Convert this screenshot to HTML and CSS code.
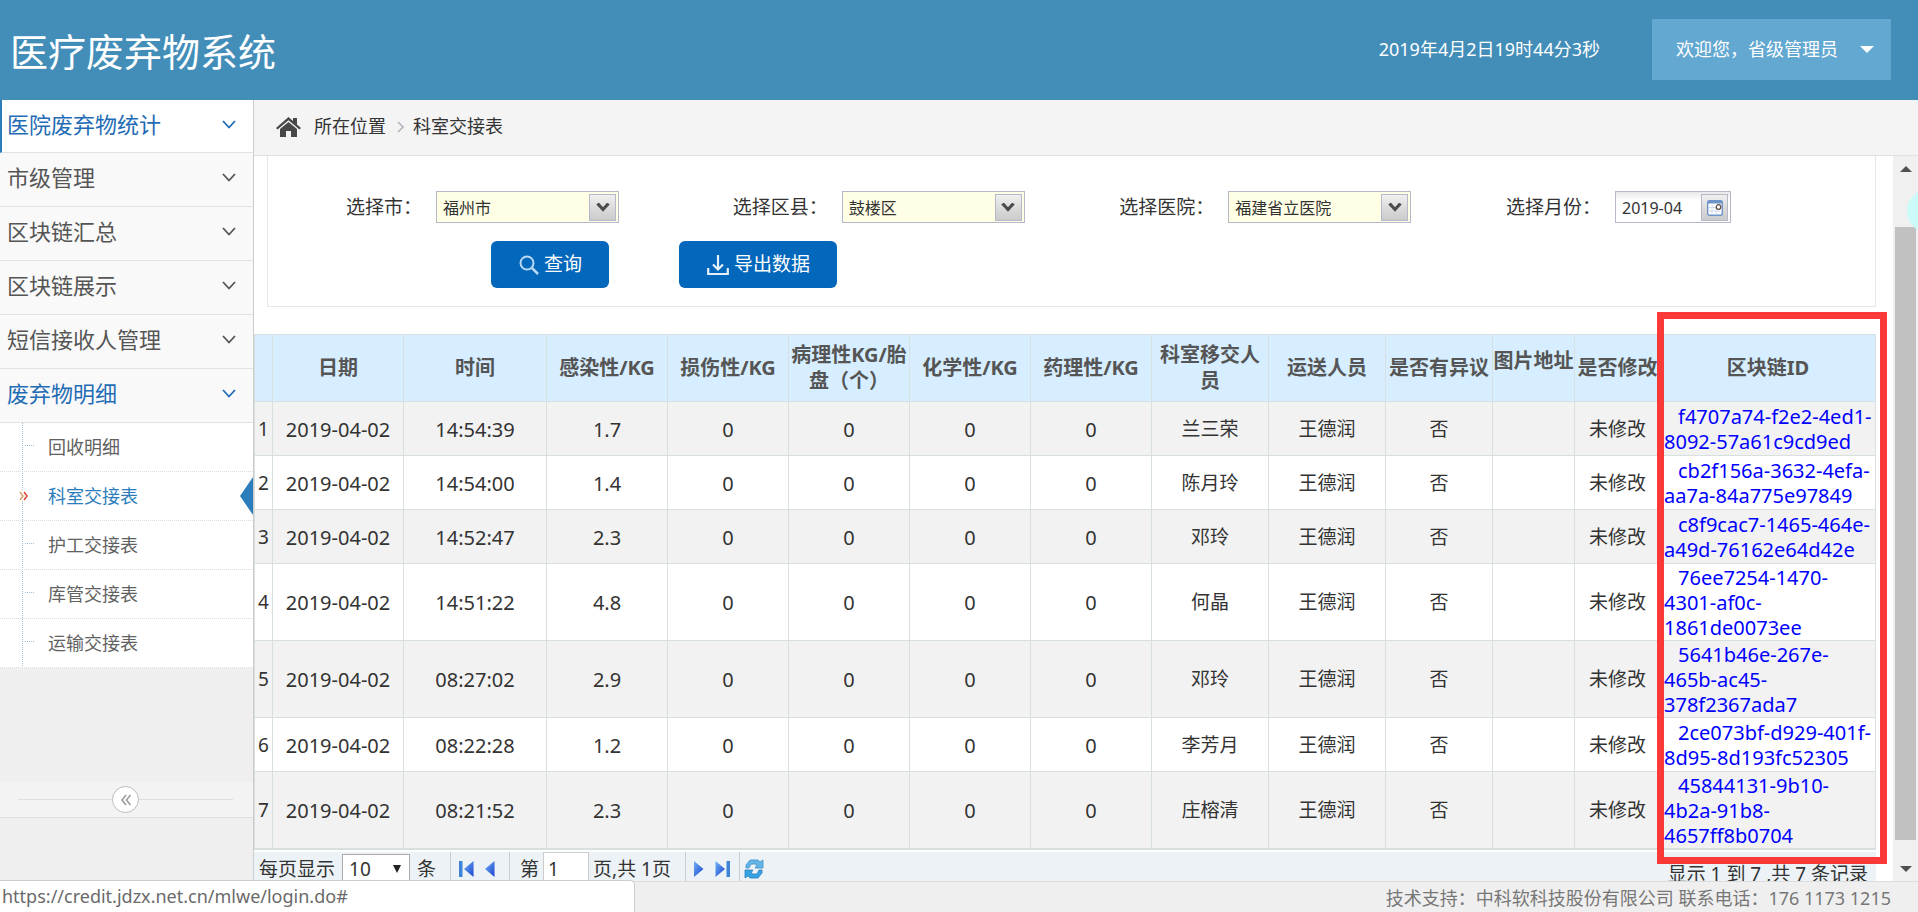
FILE: index.html
```html
<!DOCTYPE html>
<html lang="zh-CN">
<head>
  <meta charset="UTF-8">
  <meta name="viewport" content="width=device-width, initial-scale=1.0">
  <title>医疗废弃物系统</title>
  <link rel="stylesheet" href="styles.css">
</head>
<body>
  <!-- shared icons -->
  <svg class="icon-defs" aria-hidden="true">
    <symbol id="chevron" viewBox="0 0 14 9"><path d="M1 1l6 6.5L13 1" fill="none" stroke="currentColor" stroke-width="1.8"/></symbol>
    <symbol id="combo-arrow" viewBox="0 0 14 9"><path d="M1.500 .5L7 6.500l5.500-6" fill="none" stroke="#4c4c4c" stroke-width="3.200"/></symbol>
    <symbol id="arrow-left" viewBox="0 0 10 16"><path d="M9.500 0v16L0 8z" fill="url(#blue)"/></symbol>
    <linearGradient id="blue" x1="0" y1="0" x2="1" y2="1"><stop offset="0" stop-color="#6fb4f2"/><stop offset="1" stop-color="#1a3fd0"/></linearGradient>
  </svg>

  <header class="main-header">
    <h1 class="brand">医疗废弃物系统</h1>
    <div class="header-right">
      <span class="clock">2019年4月2日19时44分3秒</span>
      <button type="button" class="user-menu">欢迎您，省级管理员<span class="caret"></span></button>
    </div>
  </header>

  <div class="container">
    <aside class="sidebar">
      <ul class="nav-list">
        <li class="nav-item first"><a href="#">医院废弃物统计<svg class="chevron"><use href="#chevron"/></svg></a></li>
        <li class="nav-item"><a href="#">市级管理<svg class="chevron"><use href="#chevron"/></svg></a></li>
        <li class="nav-item"><a href="#">区块链汇总<svg class="chevron"><use href="#chevron"/></svg></a></li>
        <li class="nav-item"><a href="#">区块链展示<svg class="chevron"><use href="#chevron"/></svg></a></li>
        <li class="nav-item"><a href="#">短信接收人管理<svg class="chevron"><use href="#chevron"/></svg></a></li>
        <li class="nav-item open">
          <a href="#">废弃物明细<svg class="chevron"><use href="#chevron"/></svg></a>
          <ul class="submenu">
            <li><a href="#">回收明细</a></li>
            <li class="active"><a href="#">科室交接表</a>
              <svg class="mark" viewBox="0 0 9 10"><path d="M1 1l3 4-3 4" fill="none" stroke="#d9a06c" stroke-width="1.500"/><path d="M5 1l3 4-3 4" fill="none" stroke="#e0452b" stroke-width="1.500"/></svg>
            </li>
            <li><a href="#">护工交接表</a></li>
            <li><a href="#">库管交接表</a></li>
            <li><a href="#">运输交接表</a></li>
          </ul>
        </li>
      </ul>
      <div class="collapse">
        <button type="button" class="collapse-btn" aria-label="收起菜单">
          <svg viewBox="0 0 12 12"><path d="M6 1L2 6l4 5M10.500 1l-4 5 4 5" fill="none" stroke="#999" stroke-width="1.500"/></svg>
        </button>
      </div>
    </aside>

    <main class="main">
      <nav class="breadcrumb">
        <svg class="home" viewBox="0 0 25 20"><path d="M12.500 0L17 4V1h4v6.500l4 3.500-1.500 1.500-11-9.300-11 9.300L0 11z" fill="#484848"/><path d="M12.500 5L21 12v8h-6v-6h-5v6H4v-8z" fill="#484848"/></svg>
        <a href="#">所在位置</a>
        <svg class="sep" viewBox="0 0 7 12"><path d="M1 1l5 5-5 5" fill="none" stroke="#b2b6bf" stroke-width="1.600"/></svg>
        <span>科室交接表</span>
      </nav>

      <div class="scroll-area">
        <div class="content">
          <form class="search-panel">
            <div class="fields">
              <div class="field">
                <label for="city">选择市：</label>
                <div class="combo">
                  <select id="city"><option>福州市</option></select>
                  <span class="combo-btn"><svg><use href="#combo-arrow"/></svg></span>
                </div>
              </div>
              <div class="field">
                <label for="county">选择区县：</label>
                <div class="combo">
                  <select id="county"><option>鼓楼区</option></select>
                  <span class="combo-btn"><svg><use href="#combo-arrow"/></svg></span>
                </div>
              </div>
              <div class="field">
                <label for="hospital">选择医院：</label>
                <div class="combo">
                  <select id="hospital"><option>福建省立医院</option></select>
                  <span class="combo-btn"><svg><use href="#combo-arrow"/></svg></span>
                </div>
              </div>
              <div class="field">
                <label for="month">选择月份：</label>
                <div class="combo date">
                  <input type="text" id="month" value="2019-04">
                  <span class="combo-btn">
                    <svg class="calendar" viewBox="0 0 16 16"><rect x="0.700" y="0.700" width="14.600" height="14.600" rx="1.500" fill="#fff" stroke="#6d93c8" stroke-width="1.400"/><path d="M1 1h14v2.500H1z" fill="#6d93c8"/><path d="M2 7.500h8M2 11h11M5 5v9M9 9v5" stroke="#d3dceb" stroke-width="1"/><circle cx="11.500" cy="7" r="2.300" fill="#fff" stroke="#5c4a44" stroke-width="1.200"/></svg>
                  </span>
                </div>
              </div>
            </div>
            <div class="actions">
              <button type="button" class="btn">
                <svg class="icon-search" viewBox="0 0 20 20"><circle cx="8" cy="8" r="6.500" fill="none" stroke="#b9d9f2" stroke-width="2"/><path d="M13 13l6 6" stroke="#b9d9f2" stroke-width="2.500"/></svg>查询
              </button>
              <button type="button" class="btn">
                <svg class="icon-export" viewBox="0 0 22 22"><path d="M11 1v14M6 10.500l5 5 5-5M1.200 14v6h19.600v-6" fill="none" stroke="#e4f1fb" stroke-width="2.200"/></svg>导出数据
              </button>
            </div>
          </form>

          <div class="table-wrap">
            <table class="data-table">
              <colgroup>
                <col class="c-no"><col class="c-date"><col class="c-time">
                <col class="c-kg"><col class="c-kg"><col class="c-kg"><col class="c-kg"><col class="c-kg">
                <col class="c-person"><col class="c-person"><col class="c-doubt"><col class="c-pic"><col class="c-edit"><col class="c-id">
              </colgroup>
              <thead>
                <tr>
                  <th></th><th>日期</th><th>时间</th><th>感染性/KG</th><th>损伤性/KG</th><th>病理性KG/胎盘（个）</th><th>化学性/KG</th><th>药理性/KG</th><th>科室移交人员</th><th>运送人员</th><th>是否有异议</th><th class="pic">图片地址</th><th>是否修改</th><th>区块链ID</th>
                </tr>
              </thead>
              <tbody>
                <tr><td>1</td><td class="num">2019-04-02</td><td class="num">14:54:39</td><td class="num">1.7</td><td class="num">0</td><td class="num">0</td><td class="num">0</td><td class="num">0</td><td>兰三荣</td><td>王德润</td><td>否</td><td></td><td>未修改</td><td class="num hash"><a href="#">f4707a74-f2e2-4ed1-<br>8092-57a61c9cd9ed</a></td></tr>
                <tr><td>2</td><td class="num">2019-04-02</td><td class="num">14:54:00</td><td class="num">1.4</td><td class="num">0</td><td class="num">0</td><td class="num">0</td><td class="num">0</td><td>陈月玲</td><td>王德润</td><td>否</td><td></td><td>未修改</td><td class="num hash"><a href="#">cb2f156a-3632-4efa-<br>aa7a-84a775e97849</a></td></tr>
                <tr><td>3</td><td class="num">2019-04-02</td><td class="num">14:52:47</td><td class="num">2.3</td><td class="num">0</td><td class="num">0</td><td class="num">0</td><td class="num">0</td><td>邓玲</td><td>王德润</td><td>否</td><td></td><td>未修改</td><td class="num hash"><a href="#">c8f9cac7-1465-464e-<br>a49d-76162e64d42e</a></td></tr>
                <tr><td>4</td><td class="num">2019-04-02</td><td class="num">14:51:22</td><td class="num">4.8</td><td class="num">0</td><td class="num">0</td><td class="num">0</td><td class="num">0</td><td>何晶</td><td>王德润</td><td>否</td><td></td><td>未修改</td><td class="num hash"><a href="#">76ee7254-1470-<br>4301-af0c-<br>1861de0073ee</a></td></tr>
                <tr><td>5</td><td class="num">2019-04-02</td><td class="num">08:27:02</td><td class="num">2.9</td><td class="num">0</td><td class="num">0</td><td class="num">0</td><td class="num">0</td><td>邓玲</td><td>王德润</td><td>否</td><td></td><td>未修改</td><td class="num hash"><a href="#">5641b46e-267e-<br>465b-ac45-<br>378f2367ada7</a></td></tr>
                <tr><td>6</td><td class="num">2019-04-02</td><td class="num">08:22:28</td><td class="num">1.2</td><td class="num">0</td><td class="num">0</td><td class="num">0</td><td class="num">0</td><td>李芳月</td><td>王德润</td><td>否</td><td></td><td>未修改</td><td class="num hash"><a href="#">2ce073bf-d929-401f-<br>8d95-8d193fc52305</a></td></tr>
                <tr><td>7</td><td class="num">2019-04-02</td><td class="num">08:21:52</td><td class="num">2.3</td><td class="num">0</td><td class="num">0</td><td class="num">0</td><td class="num">0</td><td>庄榕清</td><td>王德润</td><td>否</td><td></td><td>未修改</td><td class="num hash"><a href="#">45844131-9b10-<br>4b2a-91b8-<br>4657ff8b0704</a></td></tr>
              </tbody>
            </table>
            <div class="highlight"></div>
          </div>

          <div class="pager">
            <div class="pager-left">
              <label for="pageSize">每页显示</label>
              <div class="size-box">
                <select id="pageSize"><option>10</option></select>
                <span class="size-arrow"></span>
              </div>
              <span>条</span>
              <div class="pager-group">
                <button type="button" class="pager-btn" aria-label="首页"><svg class="wide" viewBox="0 0 15 16"><path d="M0 0h3.500v16H0z" fill="#3f83d6"/><path d="M14.500 0v16L5 8z" fill="url(#blue)"/></svg></button>
                <button type="button" class="pager-btn" aria-label="上一页"><svg><use href="#arrow-left"/></svg></button>
              </div>
              <div class="pager-group page-no">
                <label for="pageNo">第</label><input type="text" id="pageNo" value="1"><span>页,共 1页</span>
              </div>
              <div class="pager-group">
                <button type="button" class="pager-btn" aria-label="下一页"><svg viewBox="0 0 10 16"><path d="M0 0v16l9.500-8z" fill="url(#blue)"/></svg></button>
                <button type="button" class="pager-btn" aria-label="末页"><svg class="wide" viewBox="0 0 15 16"><path d="M11.500 0H15v16h-3.500z" fill="#3f83d6"/><path d="M.5 0v16L10 8z" fill="url(#blue)"/></svg></button>
              </div>
              <div class="pager-group refresh">
                <button type="button" class="pager-btn" aria-label="刷新"><svg viewBox="0 0 20 20"><path d="M2 9V6l4-5h8l2 2 3-2v8h-8l2-3-2-1H7L5 9z" fill="#63b5e6" stroke="#3f8fce" stroke-width=".8"/><path d="M18 11v3l-4 5H6l-2-2-3 2v-8h8l-2 3 2 1h4l2-4z" fill="#35a3e2" stroke="#2b7fc2" stroke-width=".8"/></svg></button>
              </div>
            </div>
            <div class="pager-info">显示 1 到 7 ,共 7 条记录</div>
          </div>
        </div>

        <div class="scrollbar" aria-hidden="true">
          <span class="up"></span>
          <span class="track"><span class="thumb"></span></span>
          <span class="down"></span>
        </div>
        <div class="bubble"></div>
      </div>
    </main>
  </div>

  <footer class="main-footer">技术支持：中科软科技股份有限公司 联系电话：176 1173 1215</footer>
  <div class="status-bar">https://credit.jdzx.net.cn/mlwe/login.do#</div>
</body>
</html>
```
FILE: styles.css
```css
/* ===== Base ===== */
:root {
  --header: #438eb9;
  --user: #62a8d1;
  --blue: #2b7dbc;
  --button: #0367bc;
  --line: #d8dfdf;
  --grey: #efefef;
}

* {
  margin: 0;
  padding: 0;
  box-sizing: border-box;
}

body {
  height: 100vh;
  display: flex;
  flex-direction: column;
  overflow: hidden;
  background: var(--grey);
  color: #333;
  font-family: "Noto Sans", "Noto Sans CJK SC", sans-serif;
  font-size: 19px;
  font-weight: 400;
  line-height: 25px;
}

button,
input,
select {
  font: inherit;
  color: inherit;
}

button {
  border: none;
  background: none;
  cursor: pointer;
}

a {
  color: inherit;
  text-decoration: none;
}

ul {
  list-style: none;
}

svg {
  display: block;
  flex: none;
}

.icon-defs {
  position: absolute;
  width: 0;
  height: 0;
}

/* ===== Header ===== */
.main-header {
  flex: none;
  height: 100px;
  display: flex;
  justify-content: space-between;
  align-items: center;
  padding: 0 27px 2px 10px;
  background: var(--header);
  color: #fff;
}

.brand {
  padding-top: 3px;
  font-size: 38px;
  font-weight: 400;
  line-height: 48px;
}

.header-right {
  display: flex;
  align-items: center;
  gap: 52px;
  font-size: 18px;
}

.user-menu {
  width: 239px;
  height: 61px;
  display: flex;
  align-items: center;
  justify-content: space-between;
  padding: 0 17px 0 24px;
  background: var(--user);
  white-space: nowrap;
}

.caret {
  border: 7px solid transparent;
  border-top-color: #fff;
  border-bottom: none;
}

/* ===== Sidebar ===== */
.container {
  flex: 1;
  min-height: 0;
  display: flex;
}

.sidebar {
  flex: none;
  width: 254px;
  border-right: 1px solid #ccc;
}

.nav-item {
  background: #f9f9f9;
  color: #555;
}

.nav-item > a {
  height: 54px;
  display: flex;
  align-items: center;
  justify-content: space-between;
  padding: 0 17px 4px 7px;
  border-bottom: 1px solid #e2e2e2;
  font-size: 22px;
}

.nav-item.first > a {
  height: 53px;
  padding-left: 5px;
  border-left: 2px solid var(--blue);
  background: #fff;
}

.nav-item.first,
.nav-item.open > a {
  color: #1f6cb5;
}

.chevron {
  width: 14px;
  height: 9px;
}

.submenu {
  position: relative;
  background: #fff;
  color: #616161;
}

.submenu::before {
  content: "";
  position: absolute;
  left: 22px;
  top: 0;
  bottom: 0;
  border-left: 1px dotted #9dbdd6;
}

.submenu li {
  position: relative;
  height: 49px;
  border-bottom: 1px dotted #dcdcdc;
}

.submenu li::before {
  content: "";
  position: absolute;
  left: 25px;
  top: 22px;
  width: 9px;
  border-top: 1px dotted #9dbdd6;
}

.submenu a {
  display: block;
  padding-left: 48px;
  font-size: 18px;
  line-height: 48px;
}

.submenu .active {
  color: var(--blue);
}

.submenu .active::before {
  display: none;
}

.submenu .active::after {
  content: "";
  position: absolute;
  right: 0;
  top: 5px;
  border: 19px solid transparent;
  border-right: 13px solid var(--blue);
  border-left: none;
}

.mark {
  position: absolute;
  left: 19px;
  top: 19px;
  width: 9px;
  height: 10px;
  background: #fff;
}

.collapse {
  margin-top: 114px;
  height: 36px;
  display: flex;
  align-items: center;
  padding: 0 20px 0 18px;
  border-bottom: 1px solid #dedede;
  background: #f3f3f3;
}

.collapse::before,
.collapse::after {
  content: "";
  flex: 1;
  border-top: 1px solid #dedede;
}

.collapse-btn {
  width: 27px;
  height: 27px;
  display: flex;
  align-items: center;
  justify-content: center;
  border: 1px solid #bbb;
  border-radius: 50%;
  background: #fff;
}

.collapse-btn svg {
  width: 12px;
  height: 12px;
}

/* ===== Main ===== */
.main {
  flex: 1;
  min-width: 0;
  display: flex;
  flex-direction: column;
  background: #fff;
}

.breadcrumb {
  flex: none;
  height: 56px;
  display: flex;
  align-items: center;
  padding: 0 22px 2px;
  border-bottom: 1px solid #e2e2e2;
  background: #f4f4f4;
  font-size: 18px;
}

.home {
  width: 25px;
  height: 20px;
  margin-right: 13px;
}

.sep {
  width: 7px;
  height: 12px;
  margin: 0 9px 0 11px;
}

.scroll-area {
  position: relative;
  flex: 1;
  min-height: 0;
  display: flex;
  overflow: hidden;
}

.content {
  flex: 1;
  min-width: 0;
  padding-right: 17px;
}

/* ===== Search form ===== */
.search-panel {
  margin-left: 13px;
  padding: 35px 0 18px;
  border: 1px solid #e6e6e6;
  border-top: none;
}

.fields {
  display: grid;
  grid-template-columns: 1fr 1fr 1fr auto;
  padding: 0 144px 0 78px;
}

.field {
  display: flex;
  align-items: center;
  gap: 14px;
}

.field label {
  white-space: nowrap;
}

.combo {
  position: relative;
  width: 183px;
  height: 32px;
  font-size: 16px;
}

.combo select,
.combo input {
  appearance: none;
  width: 100%;
  height: 100%;
  padding: 2px 32px 0 6px;
  border: 1px solid #b5b8c8;
  border-radius: 0;
  background: #ffffe6;
}

.combo.date {
  width: 116px;
}

.combo.date input {
  background: linear-gradient(#e8e8e8, #fff 8px);
}

.combo-btn {
  position: absolute;
  right: 3px;
  top: 3px;
  width: 27px;
  height: 27px;
  display: flex;
  align-items: center;
  justify-content: center;
  border: 1px solid #b5b8c8;
  background: linear-gradient(#f0f0f0, #dcdcdc 50%, #cbcbcb);
  pointer-events: none;
}

.combo-btn svg {
  width: 14px;
  height: 9px;
}

.combo-btn .calendar {
  width: 16px;
  height: 16px;
}

.actions {
  display: flex;
  gap: 70px;
  padding: 18px 0 0 223px;
}

.btn {
  height: 47px;
  display: flex;
  align-items: center;
  gap: 5px;
  padding: 0 27px 0 28px;
  border-radius: 6px;
  background: var(--button);
  color: #fff;
}

.icon-search {
  width: 20px;
  height: 20px;
}

.icon-export {
  width: 22px;
  height: 22px;
}

/* ===== Table ===== */
.table-wrap {
  position: relative;
  margin-top: 27px;
}

.data-table {
  width: 100%;
  table-layout: fixed;
  border-collapse: collapse;
  border-bottom: 2px solid var(--line);
}

.c-no { width: 18px; }
.c-date { width: 131px; }
.c-time { width: 143px; }
.c-kg { width: 121px; }
.c-person { width: 117px; }
.c-doubt { width: 107px; }
.c-pic { width: 82px; }
.c-edit { width: 86px; }
.c-id { width: 215px; }

.data-table th,
.data-table td {
  border: 1px solid var(--line);
  text-align: center;
  vertical-align: middle;
}

.data-table th {
  height: 67px;
  background: #d6eeff;
  color: #555;
  font-size: 20px;
  line-height: 26px;
}

.data-table .pic {
  padding-bottom: 15px;
}

.data-table td {
  height: 54px;
  padding: 1px 0 0;
}

.data-table .num {
  font-size: 20px;
}

.data-table tbody tr:nth-child(odd) {
  background: #f2f2f2;
}

.data-table .hash {
  padding-left: 3px;
  text-align: left;
  text-indent: 14px;
  white-space: nowrap;
}

.hash a {
  color: #00f;
}

.highlight {
  position: absolute;
  top: -22px;
  right: -11px;
  bottom: -14px;
  width: 230px;
  border: 7px solid #fa3938;
  pointer-events: none;
}

/* ===== Pager ===== */
.pager {
  display: flex;
  justify-content: space-between;
  height: 40px;
  margin-top: 2px;
  background: #ecf2f6;
}

.pager-left {
  display: flex;
  align-items: center;
  height: 34px;
  padding-left: 5px;
  gap: 7px;
}

.size-box {
  position: relative;
}

.size-box select {
  appearance: none;
  width: 68px;
  height: 31px;
  padding-left: 6px;
  border: 1px solid #a9a9a9;
  border-radius: 0;
  background: #fff;
}

.size-arrow {
  position: absolute;
  right: 9px;
  top: 11px;
  border: 4px solid transparent;
  border-top: 8px solid #222;
  border-bottom: none;
}

.pager-group {
  height: 34px;
  display: flex;
  align-items: center;
  gap: 11px;
  margin-left: 7px;
  padding-left: 8px;
  border-left: 1px solid #ccc;
}

.page-no {
  gap: 4px;
  padding-left: 10px;
}

.page-no input {
  width: 46px;
  height: 34px;
  padding-left: 4px;
  border: 1px solid #ccc;
  background: #fff;
}

.pager-btn svg {
  width: 10px;
  height: 16px;
}

.pager-btn .wide {
  width: 15px;
}

.pager-group.refresh {
  margin-left: 2px;
  padding-left: 4px;
}

.refresh .pager-btn svg {
  width: 20px;
  height: 20px;
}

.pager-info {
  padding: 10px 8px 0 0;
}

/* ===== Scrollbar ===== */
.scrollbar {
  flex: none;
  width: 25px;
  display: flex;
  flex-direction: column;
  align-items: center;
  padding: 10px 0 9px;
  background: #f0f0f0;
}

.scrollbar .up,
.scrollbar .down {
  border: 6px solid transparent;
}

.scrollbar .up {
  border-top: none;
  border-bottom-color: #505050;
}

.scrollbar .down {
  border-bottom: none;
  border-top-color: #505050;
}

.track {
  flex: 1;
  width: 21px;
  padding: 55px 0 26px;
}

.thumb {
  display: block;
  height: 100%;
  background: #c1c1c1;
}

.bubble {
  position: absolute;
  right: -33px;
  top: 33px;
  width: 44px;
  height: 44px;
  border-radius: 50%;
  background: #ccfaf8;
}

/* ===== Footer ===== */
.main-footer {
  flex: none;
  height: 31px;
  padding: 4px 27px 0 0;
  border-top: 1px solid #dcdcdc;
  background: var(--grey);
  color: #777;
  font-size: 18px;
  text-align: right;
}

.status-bar {
  position: fixed;
  left: 0;
  bottom: 0;
  width: 635px;
  height: 32px;
  padding: 3px 2px;
  border: 1px solid #ccc;
  border-width: 1px 1px 0 0;
  border-top-right-radius: 5px;
  background: #fff;
  color: #6a6a6a;
  font-size: 18px;
}
```
